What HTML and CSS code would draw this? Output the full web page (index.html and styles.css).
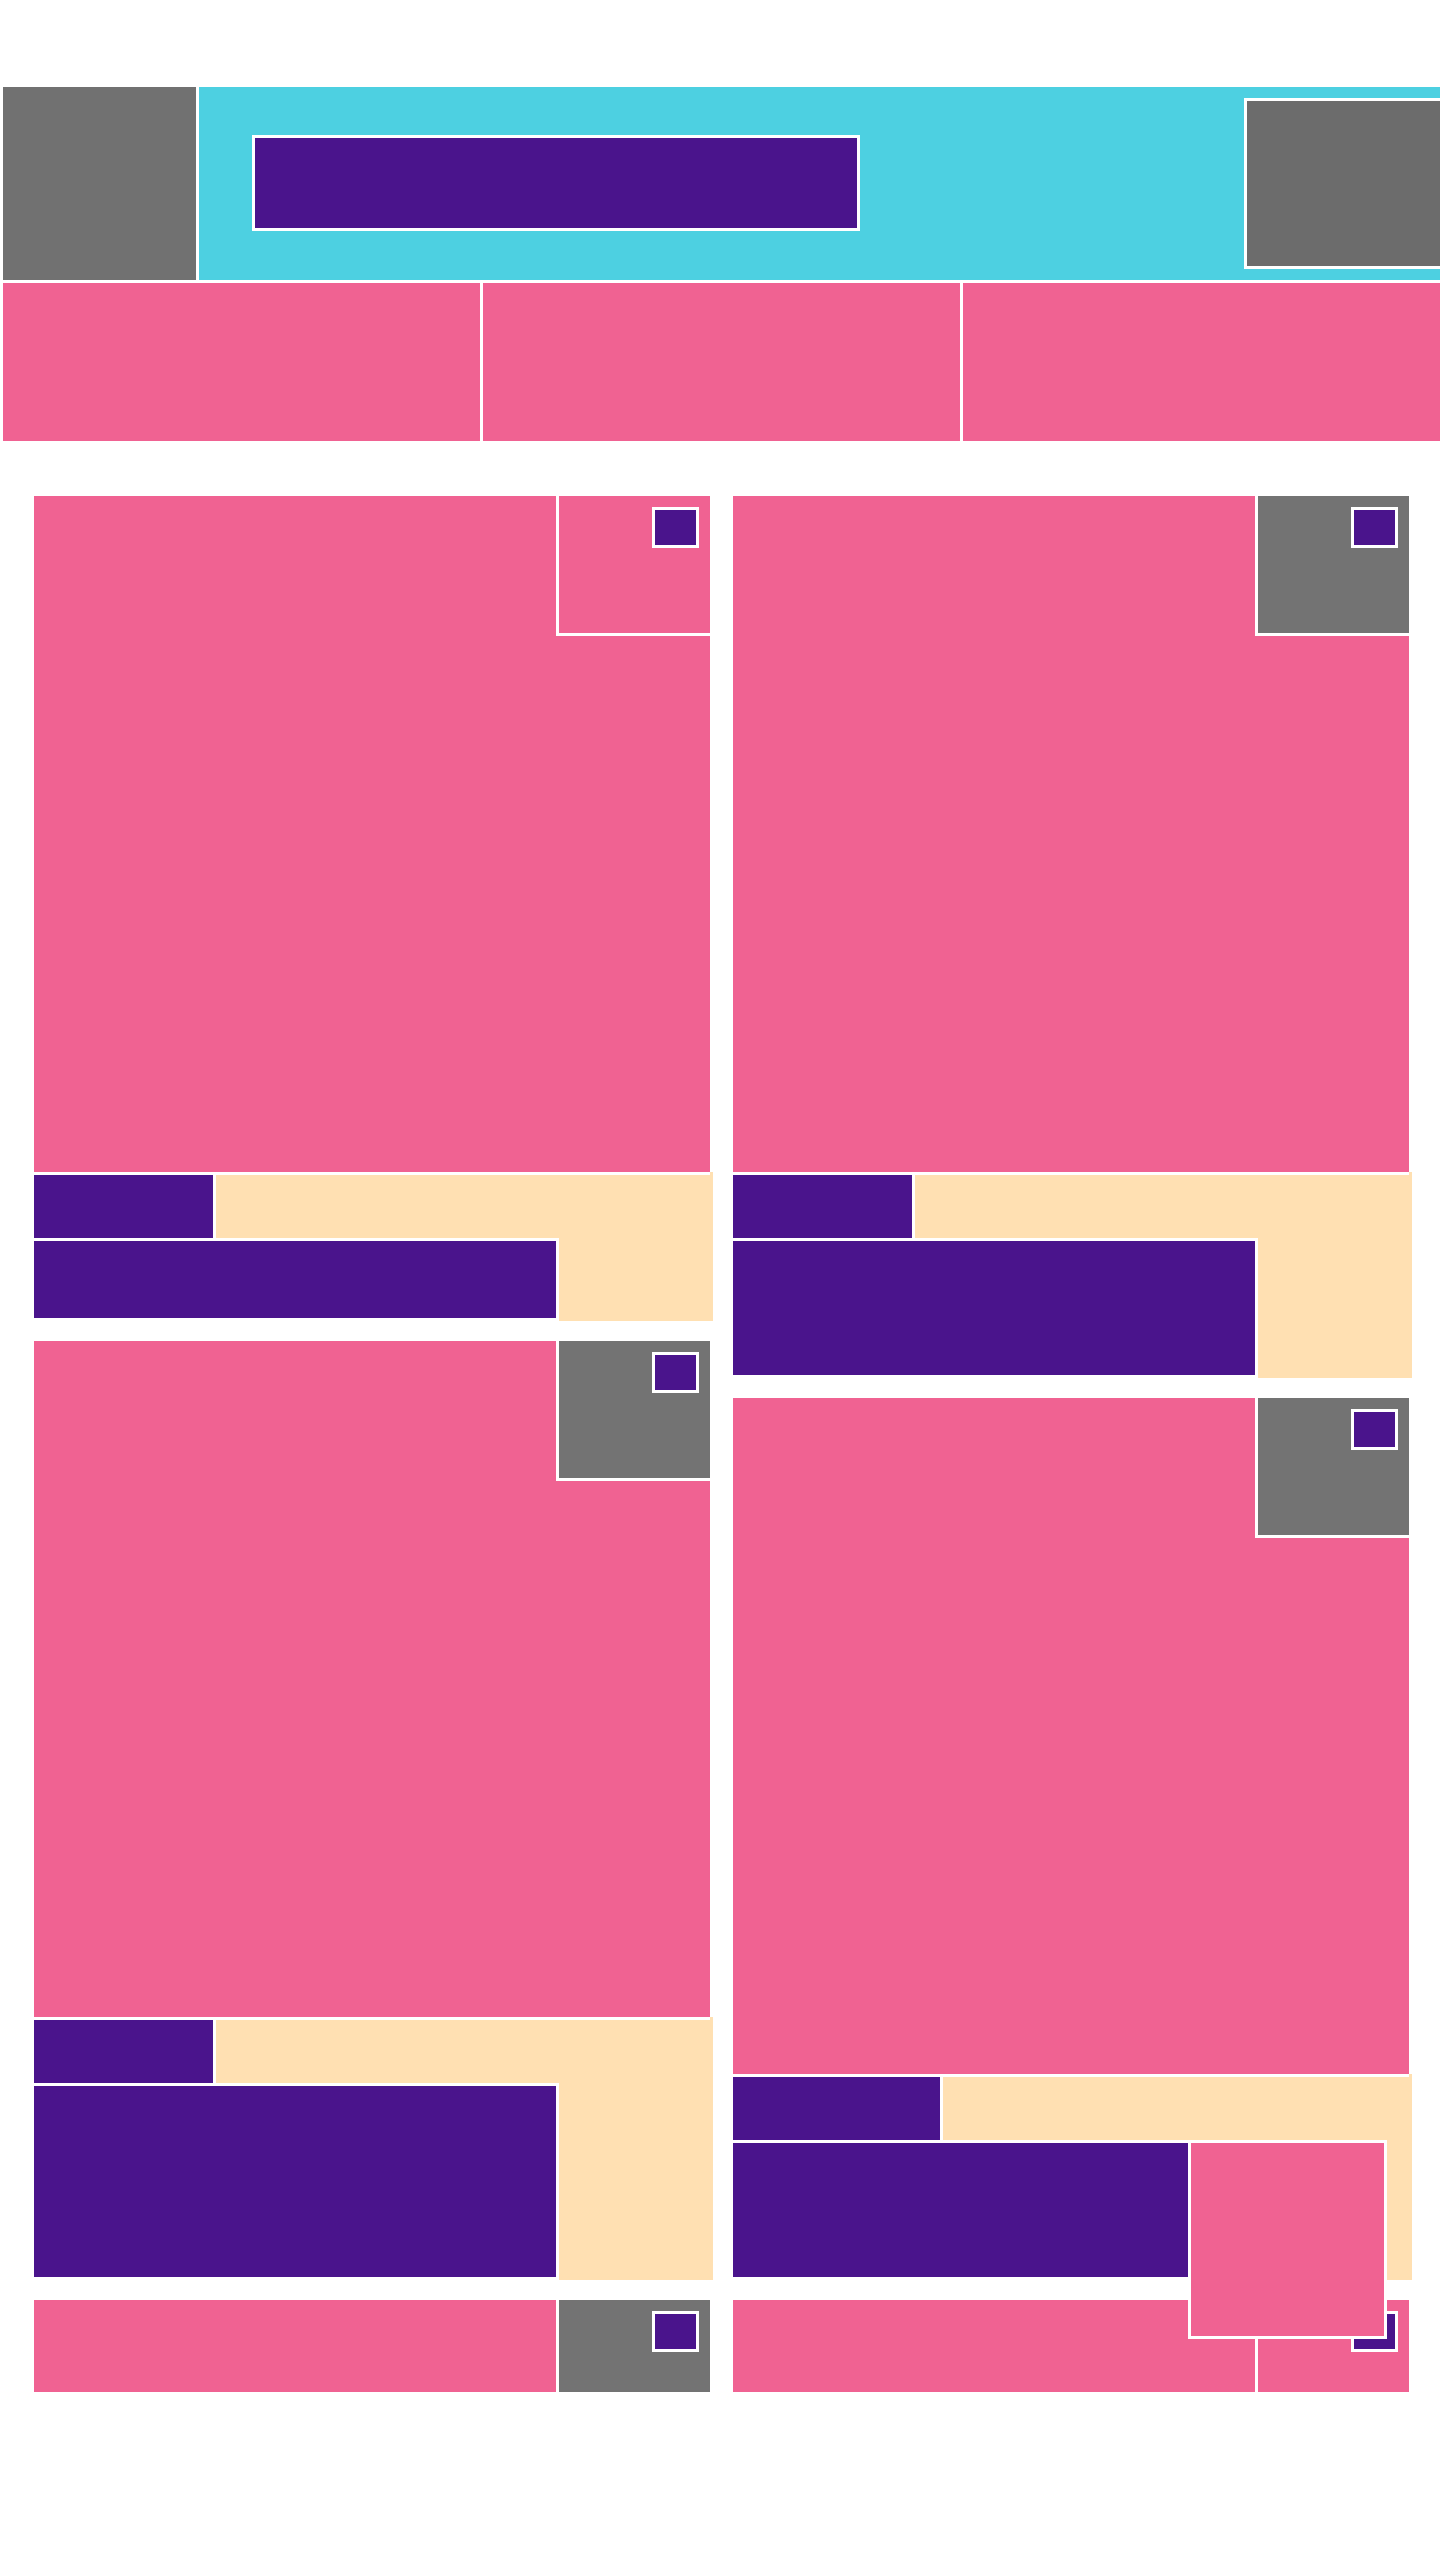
FILE: index.html
```html
<!DOCTYPE html>
<html lang="en">
<head>
<meta charset="utf-8">
<title>Feed</title>
<link rel="stylesheet" href="styles.css">
</head>
<body>
<header class="topbar">
  <div class="logo"></div>
  <div class="bar">
    <div class="search"></div>
    <div class="avatar"></div>
  </div>
</header>
<nav class="tabs">
  <div class="tab"></div>
  <div class="tab"></div>
  <div class="tab"></div>
</nav>
<main class="feed">
  <div class="col">
    <article class="card">
      <div class="media"><div class="badge badge-pink"><span class="chip"></span></div></div>
      <div class="body">
        <div class="tag"></div>
        <div class="title title-s"></div>
      </div>
    </article>
    <article class="card">
      <div class="media"><div class="badge"><span class="chip"></span></div></div>
      <div class="body">
        <div class="tag"></div>
        <div class="title title-l"></div>
      </div>
    </article>
    <article class="card">
      <div class="media"><div class="badge"><span class="chip"></span></div></div>
      <div class="body">
        <div class="tag"></div>
        <div class="title title-s"></div>
      </div>
    </article>
  </div>
  <div class="col">
    <article class="card">
      <div class="media"><div class="badge"><span class="chip"></span></div></div>
      <div class="body">
        <div class="tag"></div>
        <div class="title title-m"></div>
      </div>
    </article>
    <article class="card">
      <div class="media"><div class="badge"><span class="chip"></span></div></div>
      <div class="body">
        <div class="tag tag-wide"></div>
        <div class="title title-m"></div>
      </div>
    </article>
    <article class="card">
      <div class="media"><div class="badge badge-pink"><span class="chip"></span></div></div>
      <div class="body">
        <div class="tag"></div>
        <div class="title title-m"></div>
      </div>
    </article>
  </div>
</main>
<div class="fab"></div>
</body>
</html>
```

FILE: styles.css
```css
* { box-sizing: border-box; }

html, body {
  margin: 0;
  background: #ffffff;
  font-family: "Liberation Sans", Arial, sans-serif;
  overflow-x: hidden;
}

body { position: relative; }

.topbar {
  display: flex;
  gap: 3px;
  margin-top: 87px;
  padding-left: 3px;
  height: 193px;
  overflow: hidden;
}

.logo {
  flex: none;
  width: 193px;
  background: #717171;
}

.bar {
  flex: 1;
  display: flex;
  align-items: flex-start;
  justify-content: space-between;
  padding-left: 53px;
  background: #4dd0e1;
}

.search {
  width: 608px;
  height: 96px;
  margin-top: 48px;
  border: 3px solid #ffffff;
  background: #4a148c;
}

.avatar {
  flex: none;
  width: 199px;
  height: 171px;
  margin-top: 11px;
  margin-right: -3px;
  border: 3px solid #ffffff;
  background: #6c6c6c;
}

.tabs {
  display: flex;
  gap: 3px;
  padding-left: 3px;
  margin-top: 3px;
  height: 158px;
}

.tab {
  flex: 1;
  background: #f06292;
}

.feed {
  display: flex;
  align-items: flex-start;
  gap: 20px;
  padding-left: 34px;
  margin-top: 55px;
  height: 1896px;
  overflow: hidden;
}

.col {
  flex: none;
  width: 679px;
  display: flex;
  flex-direction: column;
  gap: 20px;
}

.media {
  position: relative;
  width: 676px;
  height: 676px;
  background: #f06292;
}

.badge {
  position: absolute;
  top: 0;
  right: 0;
  width: 154px;
  height: 140px;
  border-left: 3px solid #ffffff;
  border-bottom: 3px solid #ffffff;
  background: #737373;
}

.badge-pink { background: #f06292; }

.chip {
  position: absolute;
  top: 11px;
  right: 11px;
  width: 47px;
  height: 41px;
  border: 3px solid #ffffff;
  background: #4a148c;
}

.body {
  padding-top: 3px;
  background: linear-gradient(#ffffff, #ffffff) 0 0 / 676px 3px no-repeat, #ffe0b2;
}

.tag {
  width: 182px;
  height: 63px;
  border-right: 3px solid #ffffff;
  background: #4a148c;
}

.tag-wide { width: 210px; }

.title {
  width: 525px;
  border-top: 3px solid #ffffff;
  border-right: 3px solid #ffffff;
  border-bottom: 3px solid #ffffff;
  background: #4a148c;
}

.title-s { height: 83px; }
.title-m { height: 140px; }
.title-l { height: 197px; }

.fab {
  position: absolute;
  top: 2140px;
  left: 1188px;
  width: 199px;
  height: 199px;
  border: 3px solid #ffffff;
  background: #f06292;
}
```
